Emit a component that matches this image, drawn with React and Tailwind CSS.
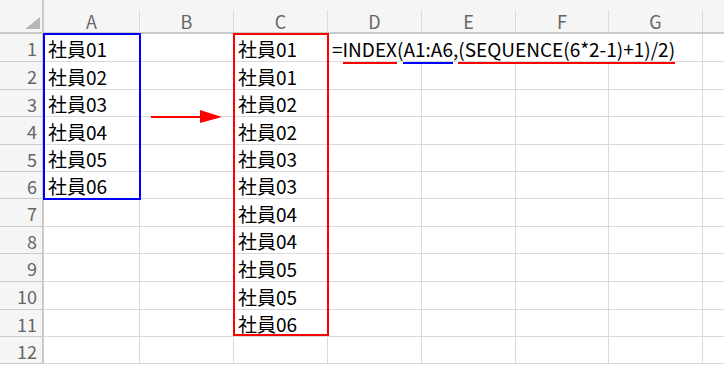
import React from "react"

const colWidths = [96, 94, 94, 94, 94, 93, 94, 22]
const rowHeights = [28, 28, 27, 28, 27, 27, 28, 27, 28, 28, 27, 27]
const letters = ["A", "B", "C", "D", "E", "F", "G", ""]

const colA = ["社員01", "社員02", "社員03", "社員04", "社員05", "社員06"]
const colC = ["社員01", "社員01", "社員02", "社員02", "社員03", "社員03", "社員04", "社員04", "社員05", "社員05", "社員06"]

function Formula() {
  return (
    <span className="relative z-10 whitespace-nowrap">
      =<span className="border-b-2 border-[#ff0000]">INDEX</span>(
      <span className="border-b-2 border-[#0000ff]">A1:A6</span>,
      <span className="border-b-2 border-[#ff0000]">(SEQUENCE(6*2-1)+1)/2)</span>
    </span>
  )
}

function Cell({ width, children }) {
  return (
    <div
      className="shrink-0 h-full border-r border-b border-[#dadada] flex items-center pl-[4px] pt-[3px] text-[19px] text-black overflow-visible whitespace-nowrap"
      style={{ width }}
    >
      {children}
    </div>
  )
}

export default function App() {
  return (
    <div className="relative w-[724px] h-[369px] overflow-hidden bg-white font-['Noto_Sans_CJK_JP',sans-serif]">
      {/* column header */}
      <div className="flex h-[34px] bg-[#f5f5f5] border-b-2 border-[#c9c9c9]">
        <div className="relative w-[44px] shrink-0 h-full border-r-2 border-[#c9c9c9]">
          <svg className="absolute right-[2px] bottom-[3px]" width="15" height="12" viewBox="0 0 15 12">
            <polygon points="15,0 15,12 0,12" fill="#b7b7b7" />
          </svg>
        </div>
        <div className="flex pt-[10px]">
          {colWidths.map((w, i) => (
            <div
              key={i}
              className="shrink-0 h-[22px] border-r border-[#dadada] flex items-center justify-center text-[18px] text-[#666]"
              style={{ width: w }}
            >
              {letters[i]}
            </div>
          ))}
        </div>
      </div>

      {/* rows */}
      {rowHeights.map((h, r) => (
        <div key={r} className={r === 0 ? "relative z-10 flex" : "flex"} style={{ height: h }}>
          <div className="w-[44px] shrink-0 h-full bg-[#f5f5f5] border-r-2 border-b border-[#c9c9c9] flex items-center justify-end pr-[5px] pt-[2px] text-[18px] text-[#666]">
            {r + 1}
          </div>
          <Cell width={colWidths[0]}>{colA[r]}</Cell>
          <Cell width={colWidths[1]} />
          <Cell width={colWidths[2]}>{colC[r]}</Cell>
          {r === 0 ? (
            <Cell width={colWidths[3] + colWidths[4] + colWidths[5] + colWidths[6]}>
              <Formula />
            </Cell>
          ) : (
            <>
              <Cell width={colWidths[3]} />
              <Cell width={colWidths[4]} />
              <Cell width={colWidths[5]} />
              <Cell width={colWidths[6]} />
            </>
          )}
          <Cell width={colWidths[7]} />
        </div>
      ))}

      {/* selection outlines */}
      <div className="absolute z-20 left-[43px] top-[33px] w-[98px] h-[167px] border-2 border-[#0000ff]" />
      <div className="absolute z-20 left-[233px] top-[33px] w-[96px] h-[303px] border-2 border-[#ff0000]" />

      {/* arrow */}
      <svg className="absolute left-[151px] top-[110px]" width="72" height="14" viewBox="0 0 72 14">
        <rect x="0" y="6" width="50" height="2" fill="#ff0000" />
        <polygon points="49,0 71,7 49,13" fill="#ff0000" />
      </svg>
    </div>
  )
}
